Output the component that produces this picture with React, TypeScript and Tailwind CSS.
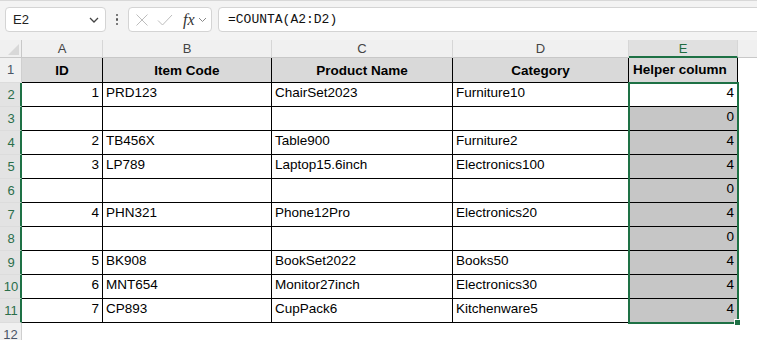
import React from "react";

type Row = { n: number; a?: string; b?: string; c?: string; d?: string; e: string };

const rows: Row[] = [
  { n: 2, a: "1", b: "PRD123", c: "ChairSet2023", d: "Furniture10", e: "4" },
  { n: 3, e: "0" },
  { n: 4, a: "2", b: "TB456X", c: "Table900", d: "Furniture2", e: "4" },
  { n: 5, a: "3", b: "LP789", c: "Laptop15.6inch", d: "Electronics100", e: "4" },
  { n: 6, e: "0" },
  { n: 7, a: "4", b: "PHN321", c: "Phone12Pro", d: "Electronics20", e: "4" },
  { n: 8, e: "0" },
  { n: 9, a: "5", b: "BK908", c: "BookSet2022", d: "Books50", e: "4" },
  { n: 10, a: "6", b: "MNT654", c: "Monitor27inch", d: "Electronics30", e: "4" },
  { n: 11, a: "7", b: "CP893", c: "CupPack6", d: "Kitchenware5", e: "4" },
];

function ColHead({ label, w, active }: { label: string; w: string; active?: boolean }) {
  return (
    <div
      className={`${w} flex h-full items-center justify-center border-r border-[#d6d6d6] text-[13px] ${
        active ? "border-b-2 border-b-[#1e7145] bg-[#e0e0e0] pt-[2px] text-[#1e6b40]" : "border-b border-b-[#c8c8c8] text-[#444]"
      }`}
    >
      {label}
    </div>
  );
}

function RowHead({ n, active, tall }: { n: number; active?: boolean; tall?: boolean }) {
  return (
    <div
      className={`flex w-[22px] shrink-0 items-center justify-center border-b border-[#dcdcdc] text-[13px] ${
        tall ? "h-[25px]" : "h-[24px]"
      } ${active ? "border-r-2 border-r-[#1e7145] bg-[#e3e3e3] pl-[2px] text-[#2a6e4a]" : "border-r border-r-[#cfcfcf] bg-[#f0f0f0] text-[#4a5566]"}`}
    >
      {n}
    </div>
  );
}

function Cell({ w, text, right, gray }: { w: string; text?: string; right?: boolean; gray?: boolean }) {
  return (
    <div
      className={`${w} flex h-full shrink-0 items-end border-b border-r border-black pb-[3px] text-[13.5px] text-black ${
        right ? "justify-end pr-[3px]" : "pl-[3px]"
      } ${gray ? "bg-[#c6c6c6]" : "bg-white"}`}
    >
      {text}
    </div>
  );
}

export default function App() {
  return (
    <div className="h-[340px] w-[757px] overflow-hidden bg-white font-['Liberation_Sans',Arial,sans-serif]">
      {/* formula bar */}
      <div className="flex h-[40px] items-start border-t border-[#d8d8d8] bg-[#f3f3f3] pt-[6px]">
        <div className="ml-[5px] flex h-[25px] w-[101px] items-center justify-between rounded-[4px] border border-[#d4d4d4] bg-white pl-[7px] pr-[6px] text-[13px] text-[#222]">
          <span>E2</span>
          <svg width="10" height="6" viewBox="0 0 10 6" fill="none">
            <path d="M1 1l4 4 4-4" stroke="#444" strokeWidth="1.3" />
          </svg>
        </div>
        <div className="flex h-[25px] w-[22px] flex-col items-center justify-center gap-[2px]">
          <span className="h-[2.5px] w-[2.5px] rounded-full bg-[#555]" />
          <span className="h-[2.5px] w-[2.5px] rounded-full bg-[#555]" />
          <span className="h-[2.5px] w-[2.5px] rounded-full bg-[#555]" />
        </div>
        <div className="flex h-[25px] w-[84px] items-center rounded-[4px] border border-[#d4d4d4] bg-white pl-[6px]">
          <svg width="14" height="14" viewBox="0 0 14 14" fill="none">
            <path d="M1.5 1.5l11 11M12.5 1.5l-11 11" stroke="#bdbdbd" strokeWidth="1" />
          </svg>
          <svg className="ml-[8px]" width="16" height="14" viewBox="0 0 16 14" fill="none">
            <path d="M1 7.5l4.5 4.5L15 2" stroke="#bdbdbd" strokeWidth="1" />
          </svg>
          <span className="ml-[10px] font-['Liberation_Serif',serif] text-[16px] italic leading-none text-[#333]">fx</span>
          <svg className="ml-[3px]" width="9" height="6" viewBox="0 0 9 6" fill="none">
            <path d="M1 1l3.5 3.5L8 1" stroke="#888" strokeWidth="1" />
          </svg>
        </div>
        <div className="-mr-[6px] ml-[6px] flex h-[25px] flex-1 items-center rounded-[4px] border border-[#d4d4d4] bg-white pl-[9px] font-['Liberation_Mono',monospace] text-[13px] text-[#111]">
          =COUNTA(A2:D2)
        </div>
      </div>

      <div className="relative">
        {/* column headers */}
        <div className="flex h-[18px] bg-[#f0f0f0]">
          <div className="relative w-[22px] border-b border-r border-[#c8c8c8]">
            <svg className="absolute bottom-[2px] right-[2px]" width="11" height="11" viewBox="0 0 11 11">
              <path d="M11 0V11H0Z" fill="#d8d8d8" />
            </svg>
          </div>
          <ColHead label="A" w="w-[81px]" />
          <ColHead label="B" w="w-[169px]" />
          <ColHead label="C" w="w-[181px]" />
          <ColHead label="D" w="w-[176px]" />
          <ColHead label="E" w="w-[109px]" active />
          <div className="flex-1 border-b border-[#c8c8c8]" />
        </div>

        {/* row 1 */}
        <div className="flex h-[25px]">
          <RowHead n={1} tall />
          {[
            ["w-[81px]", "ID"],
            ["w-[169px]", "Item Code"],
            ["w-[181px]", "Product Name"],
            ["w-[176px]", "Category"],
          ].map(([w, t]) => (
            <div
              key={t}
              className={`${w} flex shrink-0 items-center justify-center border-b border-r border-black bg-[#d9d9d9] pt-[2px] text-[13.5px] font-bold text-black`}
            >
              {t}
            </div>
          ))}
          <div className="flex w-[109px] shrink-0 items-end border-b border-r border-black bg-[#d9d9d9] pb-[2px] pl-[4px] text-[13.5px] font-bold text-black">
            Helper column
          </div>
          <div className="flex-1" />
        </div>

        {rows.map((r) => (
          <div key={r.n} className="flex h-[24px]">
            <RowHead n={r.n} active />
            <Cell w="w-[81px]" text={r.a} right />
            <Cell w="w-[169px]" text={r.b} />
            <Cell w="w-[181px]" text={r.c} />
            <Cell w="w-[176px]" text={r.d} />
            <Cell w="w-[109px]" text={r.e} right gray={r.n !== 2} />
            <div className="flex-1" />
          </div>
        ))}

        <div className="flex h-[24px]">
          <RowHead n={12} />
          <div className="flex-1" />
        </div>

        {/* selection E2:E11 */}
        <div className="pointer-events-none absolute left-[628px] top-[42px] h-[242px] w-[111px] border-2 border-[#1e7145]" />
        <div className="absolute left-[734px] top-[279px] h-[7px] w-[7px] border border-white bg-[#1e7145]" />
      </div>
    </div>
  );
}
